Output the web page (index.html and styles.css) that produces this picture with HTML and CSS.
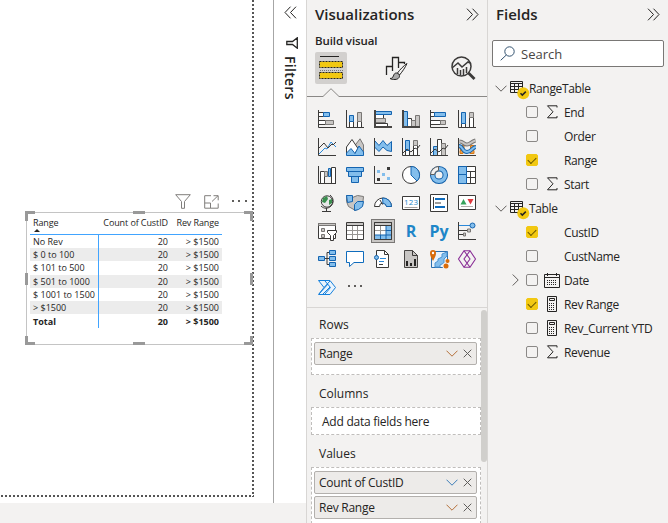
FILE: index.html
```html
<!DOCTYPE html>
<html lang="en">
<head>
	<meta charset="utf-8">
	<meta name="viewport" content="width=device-width, initial-scale=1">
	<title>Report</title>
	<link rel="stylesheet" href="styles.css">
</head>
<body>

<!-- shared icons -->
<svg class="defs" aria-hidden="true">
	<symbol id="sigma" viewBox="0 0 12 14"><path class="l" d="M11 2.500V.8H1.500L7 6.800l-5.500 6H11V11"/></symbol>
	<symbol id="down" viewBox="0 0 12 7"><path class="l" d="M.5.7 6 6.200 11.500.7"/></symbol>
	<symbol id="close" viewBox="0 0 9 9"><path class="l" d="M.7.7l7.600 7.600M8.300.7.7 8.300"/></symbol>
	<symbol id="chevrons" viewBox="0 0 13 13"><path class="l" d="M1 .7l5.500 5.800L1 12.300M6.500.7l5.500 5.800-5.500 5.800"/></symbol>
	<symbol id="calc" viewBox="0 0 12 16"><path class="l" d="M1.500.5h9v15h-9zM3.500 2.500h5v2h-5z"/><path class="l" stroke-dasharray="1 1" d="M3 7.500h6M3 9.500h6M3 11.500h6M3 13.500h6"/></symbol>
	<symbol id="grid" viewBox="0 0 20 20"><path class="l" d="M.5.5h12v11H.5zM.5 2.500h12M.5 5.500h12M.5 8.500h12M4.500 2.500v9M8.500 2.500v9"/><circle cx="13.300" cy="12.300" r="6" fill="#f2c811"/><path d="M10.500 12.300l1.800 1.800 3.500-3.500" fill="none" stroke="#252423" stroke-width="1.500"/></symbol>
</svg>

<div class="app">
	<div class="report">
		<div class="page">
			<div class="visual-header">
				<svg width="16" height="15"><path d="M.7.7h14.600L9.500 7.500v6.800h-3V7.500z"/></svg>
				<svg width="15" height="14"><path d="M7 .7H.7v12.500h13.500V8.500M.7 8h5.800v5M8 6.500l6-5.800M9.500.7h4.700v4.600"/></svg>
				<svg width="16" height="4"><path class="dots" d="M0 0h2v2H0zM6 0h2v2H6zM13 0h2v2h-2z"/></svg>
			</div>
			<div class="visual">
				<svg class="handles" width="230" height="135">
					<path d="M0 0h10v3H3v7H0zM108 0h12v3h-12zM219 0h9v10h-3V3h-6zM0 62h3v12H0zM225 62h3v12h-3zM0 125h3v6h7v3H0zM108 131h12v3h-12zM228 125h-3v6h-6v3h9z"/>
				</svg>
				<table class="matrix">
					<thead>
						<tr><th>Range<i class="sort"></i></th><th>Count of CustID</th><th>Rev Range</th></tr>
					</thead>
					<tbody>
						<tr><td>No Rev</td><td>20</td><td>&gt; $1500</td></tr>
						<tr><td>$ 0 to 100</td><td>20</td><td>&gt; $1500</td></tr>
						<tr><td>$ 101 to 500</td><td>20</td><td>&gt; $1500</td></tr>
						<tr><td>$ 501 to 1000</td><td>20</td><td>&gt; $1500</td></tr>
						<tr><td>$ 1001 to 1500</td><td>20</td><td>&gt; $1500</td></tr>
						<tr><td>&gt; $1500</td><td>20</td><td>&gt; $1500</td></tr>
						<tr class="total"><td>Total</td><td>20</td><td>&gt; $1500</td></tr>
					</tbody>
				</table>
			</div>
		</div>
	</div>

	<div class="filters">
		<svg class="flip" width="13" height="13"><use href="#chevrons"/></svg>
		<svg class="funnel" width="12" height="12"><path class="l" stroke-width="1.300" d="M11.300.8v10.400L6.500 7.500H.8v-3h5.700z"/></svg>
		<span>Filters</span>
	</div>

	<div class="viz">
		<div class="pane-title"><h2>Visualizations</h2><svg width="13" height="13"><use href="#chevrons"/></svg></div>
		<h3>Build visual</h3>
		<div class="tabs">
			<div class="tab active">
				<svg width="25" height="26"><path d="M1 1.500h19" stroke="#252423"/><path d="M.5 6.500h23v6H.5zM.5 17.500h23v6H.5z" fill="#f2c811" stroke="#252423" stroke-dasharray="2 1"/><path d="M1 15.500h23" stroke="#777" stroke-dasharray="1 1"/></svg>
			</div>
			<div class="tab">
				<svg width="24" height="25"><path class="l" stroke-width="1.300" d="M1.500 19V10.500H7M7.500 15V1.500h6V12M13.500 6.500h6V8"/><path class="l" d="M22 7.500c-3 2-7 6-9.500 9.500l2 2C17.500 15.500 20.500 11 22 7.500z"/><path d="M5 22.500c3 0 3-2 4-4s3.500-2 5 0-.5 5-4 5c-2 0-4-.3-5-1z" fill="#aaa" stroke="#252423"/></svg>
			</div>
			<div class="tab">
				<svg width="25" height="25"><g fill="none" stroke="#3b3a39" stroke-width="1.500"><circle cx="10.500" cy="10.500" r="9.500"/><path d="M1 12l6-5 4 4 6-5 2 1M6.500 12v6M9.500 14v5M12.500 13v6M15.500 11v6"/><path d="M17.500 17l6 6" stroke-width="2.800"/></g></svg>
			</div>
		</div>
		<svg class="notch" width="180" height="9"><path d="M0 8.500h16L24 .7l8 7.800h148"/></svg>

		<div class="gallery">
			<svg><path class="w" d="M.5 2.500h5v4h-5zM.5 10.500h7v4h-7z"/><path class="b" d="M5.500 2.500h6v4h-6z"/><path class="g" d="M7.500 10.500h8v4h-8z"/><path class="k" d="M.5 0v17.500H18"/></svg>
			<svg><path class="w" d="M3.500 11.500h4v6h-4zM11.500 11.500h4v6h-4z"/><path class="b" d="M3.500 5.500h4v6h-4z"/><path class="g" d="M11.500 2.500h4v9h-4z"/><path class="k" d="M.5 0v17.500H18"/></svg>
			<svg><path class="w" d="M.5 4.500h9v4h-9zM.5 13.500h13v3h-13z"/><path class="g" d="M.5 8.500h11v4h-11z"/><path class="b" d="M.5 1.500h17v3H.5z"/><path class="k2" d="M1 0v17h17"/></svg>
			<svg><path class="w" d="M5.500 8.500h4v9h-4z"/><path class="g" d="M9.500 10.500h4v7h-4zM13.500 5.500h4v12h-4z"/><path class="b" d="M1.500 1.500h4v16h-4z"/><path class="k2" d="M1 0v17h17"/></svg>
			<svg><path class="w" d="M.5 2.500h4v4h-4zM.5 10.500h10v4H.5z"/><path class="b" d="M4.500 2.500h11v4h-11z"/><path class="g" d="M10.500 10.500h5v4h-5z"/><path class="k" d="M.5 0v17.500H18"/></svg>
			<svg><path class="w" d="M3.500 13.500h4v4h-4zM11.500 7.500h4v10h-4z"/><path class="b" d="M3.500 2.500h4v11h-4z"/><path class="g" d="M11.500 2.500h4v5h-4z"/><path class="k" d="M.5 0v17.500H18"/></svg>

			<svg><path class="bl" d="M1 16l6-6 2 1 4-7 5 5"/><path class="k" d="M.5 0v17.500H18M1 10l5-5 4 5 4-4 1 1 3-3"/></svg>
			<svg><path class="g" d="M8.500 8L14 .8 17.500 7v10h-6z"/><path class="w" d="M.5 16V9L6 1.500l6 9-3 5z"/><path class="b" d="M.5 17.500V15L5 10.500l4 5 4-7.500 4.500 6v3.500z"/></svg>
			<svg><path class="b" d="M.5 2.500L5 7.500l4-5 4 5 4.500-4v10l-4.500-1-4-3.500-4 4.500-4.500-4.500z"/><path class="k" d="M.5 0v17.500H18"/></svg>
			<svg><path class="w" d="M3.500 10.500h4v7h-4zM11.500 7.500h4v10h-4z"/><path class="b" d="M3.500 2.500h4v10h-4z"/><path class="g" d="M11.500 2.500h4v5h-4z"/><path class="k" d="M.5 0v17.500H18M1 15l4-4 4 3 4-4 2 1 3-4"/></svg>
			<svg><path class="b" d="M3.500 8.500h4v9h-4z"/><path class="w" d="M7.500 1.500h4v16h-4z"/><path class="g" d="M11.500 5.500h4v12h-4z"/><path class="k" d="M.5 0v17.500H18M1 15l4-4 4 3 4-4 2 1 3-4"/></svg>
			<svg><path d="M2 7.500h4v4H2zM12.500 7.500h4v4h-4zM2 12.500h3v3H2zM12 12.500h4v3h-4z" fill="#f0a04b" stroke="#d87915"/><path d="M1.500 3.500c4 0 4 3 7.500 3s4-3 8.500-4" fill="none" stroke="#797775" stroke-width="4"/><path d="M1.500 3.500c4 0 4 3 7.500 3s4-3 8.500-4" fill="none" stroke="#c8c6c4" stroke-width="2"/><path d="M1 8c4 0 3 6 8 6s5-5 9-5" fill="none" stroke="#1464b0" stroke-width="4"/><path d="M1 8c4 0 3 6 8 6s5-5 9-5" fill="none" stroke="#83beec" stroke-width="2"/><path class="k" d="M.5 0v17.500H18"/></svg>

			<svg><path class="w" d="M2.500 5.500h4v12h-4zM13.500 1.500h4v16h-4z"/><path class="g" d="M6.500 5.500h3v5h-3z"/><path class="b" d="M10.500 2.500h2v8h-2z"/><path class="k" d="M.5 0v17.500H18"/></svg>
			<svg><path class="b" d="M.5 1.500h17v4H.5zM2.500 5.500h13v5h-13zM5.500 10.500h7v6h-7z"/></svg>
			<svg><path d="M13 1h3v3h-3zM3 12h3v3H3z" fill="#3b3a39"/><path d="M3 4h3v3H3zM8 7h3v3H8zM13 11h3v3h-3z" fill="#83beec"/><path class="k" d="M.5 0v17.500H18"/></svg>
			<svg><circle class="w" cx="9" cy="9" r="8.500"/><path class="b" d="M9 .5A8.500 8.500 0 0 1 15 15L9 9z"/></svg>
			<svg><circle cx="9" cy="9" r="6.300" fill="none" stroke="#0f5ea8" stroke-width="5.500"/><circle cx="9" cy="9" r="6.300" fill="none" stroke="#83beec" stroke-width="3.500"/><path d="M.5 8.500A8.500 8.500 0 0 1 8.500.5v4a4.500 4.500 0 0 0-4 4z" fill="#f3f2f1" stroke="#605e5c"/></svg>
			<svg><path class="w" d="M.5.5h17v17H.5zM8.500 5.500h9M12.500 5.500v12M8.500 11.500h9"/><path class="b" d="M.5.5h8v8h-8zM.5 8.500h8v9h-8z"/></svg>

			<svg><circle cx="9" cy="7.500" r="5.700" fill="#e8e8e8" stroke="#3b3a39"/><path d="M5 4l4-2 1 3-3 4-3-1zM11 6l3-1v4l-3 2z" fill="#3a8f4e"/><path class="k" d="M12 1c4 3 4 8 1 11s-7 3-10 0M8.500 14v3M4 17.500h9"/></svg>
			<svg><path class="g" d="M.5 1.500l6 2 5-2 6 1-1 9-7 5-7-4-2-5z"/><path class="b" d="M.5 1.500h6v6l-5 1zM8.500 10.500l3-3h6l-1 5-4 3-4 1z"/></svg>
			<svg><path class="w" d="M.5 12.500a8.500 8.500 0 0 1 17 0h-5a3.500 3.500 0 0 0-7 0z"/><path class="b" d="M8.500 4a8.500 8.500 0 0 1 9 8.500h-5A3.500 3.500 0 0 0 9 9.500z"/><path class="k" d="M8.500 10.500L6 6"/></svg>
			<svg><path class="w" d="M.5 2.500h17v13H.5z"/><text x="2" y="11" font-size="8" textLength="14">123</text><path d="M2.500 13.500h13" stroke="#a19f9d"/></svg>
			<svg><path class="w" d="M.5.5h17v17H.5z"/><path class="k" d="M3.500 3v12"/><path d="M5 5h10M5 13h10" stroke="#0f6cbd" stroke-width="2"/><path class="k" d="M5 9h6" stroke="#999"/></svg>
			<svg><path class="w" d="M.5 1.500h17v14H.5z"/><path d="M2.500 10.500L5.500 5l3 5.500z" fill="#36a35c"/><path d="M9.500 5h6l-3 5.500z" fill="#e0393e"/><path d="M3 12.500h12" stroke="#b3b0ad"/></svg>

			<svg><path class="w" d="M.5 1.500h17v15H.5z"/><path class="g" d="M.5 1.500h17v2H.5zM3.500 6.500h3v3h-3zM3.500 12.500h3v3h-3z"/><path class="w" d="M9.500 8.500h9v2l-3 3v5h-3v-5l-3-3z"/></svg>
			<svg><path class="w" d="M.5.5h17v17H.5z"/><path d="M1 8.500h16M1 12.500h16M6.500 4v13M11.500 4v13" stroke="#979593"/><path d="M1 1h16v2.500H1z" fill="#c8c6c4"/><path class="k" d="M0 3.500h18"/></svg>
			<div class="selected"><svg><path class="w" d="M.5.5h17v17H.5z"/><path d="M1 13h16v4H1zM12 4h5v13h-5z" fill="#83beec"/><path d="M1 8.500h11M6.500 4v9" stroke="#979593"/><path d="M1 13h16M6.500 13v4M12 4v13M12 8.500h5" stroke="#1464b0"/><path d="M1 1h16v2.500H1z" fill="#c8c6c4"/><path class="k" d="M0 3.500h18M.5.5h17v17H.5z"/></svg></div>
			<b>R</b>
			<b>Py</b>
			<svg><path class="k" d="M.5 0v17.500H18"/><path class="bl" d="M1 3.500h11"/><path class="k" stroke="#777" d="M1 8.500h8M1 12.500h4"/><path class="g" d="M9.500 7h3v3h-3zM5.500 11h2v3h-2z"/><circle class="b" cx="14.500" cy="3.500" r="2.500"/></svg>

			<svg><path class="k" d="M6 8.500h6M9 2.500h3M9 14.500h3M9 2.500v12"/><path class="b" d="M.5 6.500h6v4h-6zM11.500.5h6v4h-6zM11.500 6.500h6v4h-6zM11.500 12.500h6v4h-6z"/></svg>
			<svg><path d="M.5 1.500h17v11H8L3.500 16.500v-4h-3z" fill="#fff" stroke="#0f6cbd"/></svg>
			<svg><path class="w" d="M2.500.5h8l4 4v13h-12z"/><path class="k" d="M10.500.5v4h4"/><path class="bl" d="M6 8.500h6M5 11.500h5"/><path class="k" stroke="#999" d="M5 14.500h4"/><circle class="b" cx="2.500" cy="7.500" r="2"/></svg>
			<svg><path class="g dark" d="M2.500.5h8l5 5v12h-13z"/><path class="k" d="M10.500.5v5h5"/><path d="M4 11h2v5H4zM8 13h2v3H8zM12 9h2v7h-2z" fill="#252423"/></svg>
			<svg><path d="M1.500 1.500h16v16h-16z" fill="#e9f3fb" stroke="#2b6fae"/><path d="M5 17V13l3-2V9l4-2V4l5-2v4l-3 3v4l-4 2v2z" fill="#83beec" stroke="#4a94d4"/><path d="M3 11C1 7 0 6 0 3a3 3 0 0 1 6 0c0 3-1 4-3 8z" fill="#d86c0b"/><circle cx="3" cy="3" r="1.200" fill="#fff"/><circle cx="16" cy="16" r="3.500" fill="#f3f2f1"/><circle cx="16" cy="16" r="2.500" fill="#d86c0b"/><circle cx="17.500" cy="11" r="2" fill="#d86c0b"/></svg>
			<svg><g fill="none" stroke="#8a2f97" stroke-width="1.100"><path d="M6 .8h6l5.500 8.200-5.500 8.200H6L.5 9z"/><path d="M6 .8L12 9 6 17.200M12 .8L6 9l6 8.200"/></g></svg>

			<svg><path d="M.5 2.500H12L17.500 9.500 12 16.500H.5L6 9.500z" fill="#eaf4fd" stroke="#1480dc"/><path d="M7 3l5.500 6.500L7 16M6 9.500L12 3M1 16L10 6M5 16l7-7" fill="none" stroke="#1480dc"/></svg>
			<svg><path d="M2 7h2v2H2zM8 7h2v2H8zM14 7h2v2h-2z" fill="#605e5c"/></svg>
		</div>

		<div class="wells">
			<div class="well-list">
				<h4>Rows</h4>
				<div class="well">
					<div class="pill">Range<svg class="orange" width="12" height="7"><use href="#down"/></svg><svg width="9" height="9"><use href="#close"/></svg></div>
				</div>
				<h4>Columns</h4>
				<div class="well empty">Add data fields here</div>
				<h4>Values</h4>
				<div class="well open">
					<div class="pill">Count of CustID<svg class="blue" width="12" height="7"><use href="#down"/></svg><svg width="9" height="9"><use href="#close"/></svg></div>
					<div class="pill">Rev Range<svg class="orange" width="12" height="7"><use href="#down"/></svg><svg width="9" height="9"><use href="#close"/></svg></div>
				</div>
			</div>
			<div class="thumb"></div>
		</div>
	</div>

	<div class="fields">
		<div class="pane-title"><h2>Fields</h2><svg width="13" height="13"><use href="#chevrons"/></svg></div>
		<div class="search">
			<svg width="15" height="15"><circle cx="9.500" cy="5.500" r="4.700"/><path d="M6.300 9L.7 14.300"/></svg>
			<span>Search</span>
		</div>
		<ul>
			<li class="group"><svg class="arrow" width="12" height="7"><use href="#down"/></svg><svg class="grid" width="20" height="20"><use href="#grid"/></svg>RangeTable</li>
			<li><i class="box"></i><span class="kind"><svg width="12" height="14"><use href="#sigma"/></svg></span>End</li>
			<li><i class="box"></i><span class="kind"></span>Order</li>
			<li><i class="box on"></i><span class="kind"></span>Range</li>
			<li><i class="box"></i><span class="kind"><svg width="12" height="14"><use href="#sigma"/></svg></span>Start</li>
			<li class="group"><svg class="arrow" width="12" height="7"><use href="#down"/></svg><svg class="grid" width="20" height="20"><use href="#grid"/></svg>Table</li>
			<li><i class="box on"></i><span class="kind"></span>CustID</li>
			<li><i class="box"></i><span class="kind"></span>CustName</li>
			<li class="expand"><svg class="arrow" width="7" height="12"><path class="l" d="M.7.5l5.500 5.500L.7 11.500"/></svg><i class="box"></i><span class="kind"><svg width="16" height="15"><path class="l" d="M.5 1.500h15v13H.5zM.5 4.500h15M3.500 0v3M12.500 0v3"/><path class="l" stroke-dasharray="1 1" d="M3 7.500h10M3 9.500h10M3 11.500h10"/></svg></span>Date</li>
			<li><i class="box on"></i><span class="kind"><svg width="12" height="16"><use href="#calc"/></svg></span>Rev Range</li>
			<li><i class="box"></i><span class="kind"><svg width="12" height="16"><use href="#calc"/></svg></span>Rev_Current YTD</li>
			<li><i class="box"></i><span class="kind"><svg width="12" height="14"><use href="#sigma"/></svg></span>Revenue</li>
		</ul>
	</div>
</div>

</body>
</html>
```
FILE: styles.css
```css
*{
	box-sizing: border-box;
}
body{
	margin: 0;
	font-family: "Open Sans", "Noto Sans", sans-serif;
	font-size: 12px;
	color: #252423;
	background-color: #f3f2f1;
	overflow: hidden;
}
h2, h3, h4, ul{
	margin: 0;
	padding: 0;
	font-weight: 600;
}
svg{
	display: block;
	flex: none;
}
.defs{
	position: absolute;
	width: 0;
	height: 0;
}
.l{
	fill: none;
	stroke: currentColor;
}

.app{
	display: flex;
	height: 523px;
}

/* report canvas */
.report{
	width: 274px;
	height: 503px;
	background-color: white;
	border-right: 1px solid #a6a6a6;
}
.page{
	width: 254px;
	height: 497px;
	padding: 194px 0 0 25px;
	background-image: repeating-linear-gradient(to bottom, #555 0 2px, transparent 2px 4px), repeating-linear-gradient(to right, transparent 0 1px, #555 1px 3px, transparent 3px 4px);
	background-size: 2px 100%, 100% 2px;
	background-position: right top, left bottom;
	background-repeat: no-repeat;
}
.visual-header{
	display: flex;
	align-items: center;
	gap: 13px;
	height: 15px;
	margin-bottom: 3px;
	padding-left: 150px;
}
.visual-header path{
	fill: none;
	stroke: #807e7c;
}
.visual-header .dots{
	fill: #605e5c;
	stroke: none;
}
.visual{
	position: relative;
	width: 227px;
	height: 133px;
	margin-left: 1px;
	padding: 3px 0 0 3px;
	border: 1px solid #c4c4c4;
	border-right: 0;
}
.handles{
	position: absolute;
	left: -2px;
	top: -2px;
	fill: #999;
}
.matrix{
	width: 192px;
	table-layout: fixed;
	border-collapse: separate;
	border-spacing: 0;
	font-size: 9px;
	line-height: 13px;
}
.matrix th, .matrix td{
	padding: 0 3px;
	text-align: right;
	font-weight: 400;
	white-space: nowrap;
}
.matrix th{
	height: 19px;
	vertical-align: top;
	letter-spacing: -0.1px;
	border-bottom: 1px solid #41a4ff;
}
.matrix td{
	height: 13.2px;
}
.matrix th:first-child, .matrix td:first-child{
	width: 69px;
	text-align: left;
}
.matrix td:first-child{
	border-right: 1px solid #41a4ff;
}
.matrix th:last-child{
	width: 51px;
}
.matrix tbody tr:nth-child(even){
	background-color: #ececec;
}
.matrix .total td{
	font-weight: 700;
	height: 14px;
}
.sort{
	display: block;
	width: 0;
	margin-left: 1px;
	border: 3px solid transparent;
	border-top: 0;
	border-bottom: 3px solid #252423;
}

/* collapsed filters pane */
.filters{
	width: 32px;
	height: 503px;
	padding-top: 6px;
	display: flex;
	flex-direction: column;
	align-items: center;
	background-color: white;
}
.flip{
	transform: scaleX(-1);
}
.funnel{
	margin: 18px 0 7px 3px;
}
.filters span{
	writing-mode: vertical-rl;
	font-size: 14px;
	font-weight: 600;
	line-height: 16px;
	letter-spacing: 0.3px;
}

/* visualizations pane */
.pane-title{
	display: flex;
	justify-content: space-between;
	align-items: center;
	height: 28px;
	padding: 0 8px 0 8px;
}
.pane-title h2{
	font-size: 15px;
	line-height: 20px;
}
.viz{
	width: 181px;
	display: flex;
	flex-direction: column;
	border-left: 1px solid #d8d6d4;
}
.viz h3{
	padding-left: 8px;
	margin-top: 4px;
	font-size: 11.500px;
	line-height: 18px;
	letter-spacing: -0.1px;
}
.tabs{
	display: flex;
	gap: 34px;
	padding: 2px 8px 0;
}
.tab{
	display: flex;
	align-items: center;
	justify-content: center;
	width: 32px;
	height: 32px;
	border-radius: 2px;
}
.tab svg{
	fill: none;
}
.active{
	background-color: #d2d0ce;
}
.notch{
	margin-top: 4px;
	fill: none;
	stroke: #8a8886;
}
.gallery{
	display: grid;
	grid-template-columns: repeat(6, 28px);
	grid-auto-rows: 28px;
	place-items: center;
	padding: 8px 0 0 6px;
	height: 210px;
}
.gallery svg{
	width: 18px;
	height: 18px;
	overflow: visible;
}
.gallery b{
	color: #1e86c8;
	font-size: 16px;
	line-height: 20px;
}
.gallery text{
	fill: #1e86c8;
}
.selected{
	padding: 2px;
	border: 1px solid #797775;
	background-color: #c8c6c4;
}
.w{
	fill: #fff;
	stroke: #3b3a39;
}
.b{
	fill: #83beec;
	stroke: #1464b0;
}
.g{
	fill: #c8c6c4;
	stroke: #797775;
}
.dark{
	stroke: #484644;
}
.k{
	fill: none;
	stroke: #3b3a39;
}
.k2{
	fill: none;
	stroke: #484644;
	stroke-width: 2px;
}
.bl{
	fill: none;
	stroke: #2b88d8;
}

.wells{
	display: flex;
	flex: 1;
	border-top: 1px solid #d8d6d4;
	overflow: hidden;
}
.well-list{
	width: 174px;
	padding: 3px 0 0 4px;
}
.wells h4{
	height: 27px;
	padding-left: 8px;
	font-weight: 400;
	line-height: 28px;
}
.well{
	width: 170px;
	margin-bottom: 5px;
	padding: 3px 3px 7px 2px;
	border: 1px dashed #c0bebc;
	background-color: white;
}
.well.empty{
	height: 28px;
	padding: 0 10px;
	line-height: 27px;
	letter-spacing: -0.25px;
	white-space: nowrap;
}
.pill{
	display: flex;
	align-items: center;
	gap: 5px;
	height: 23px;
	padding: 0 4px;
	margin-bottom: 2px;
	border: 1px solid #b3b0ad;
	border-radius: 2px;
	background-color: #edebe9;
	letter-spacing: -0.25px;
}
.pill svg{
	color: #605e5c;
}
.pill svg:first-of-type{
	margin-left: auto;
}
.pill .orange{
	color: #b5703a;
}
.pill .blue{
	color: #3f7fb8;
}
.thumb{
	width: 6px;
	height: 152px;
	margin-top: 2px;
	border-radius: 3px;
	background-color: #d0cfcc;
}

/* fields pane */
.fields{
	width: 181px;
	border-left: 1px solid #d8d6d4;
}
.search{
	display: flex;
	align-items: center;
	gap: 6px;
	width: 172px;
	height: 27px;
	margin: 12px 0 9px 4px;
	padding-left: 7px;
	border: 1px solid #797775;
	border-radius: 2px;
	background-color: white;
	font-size: 13px;
	color: #484644;
}
.search svg{
	fill: none;
	stroke: #33526f;
}
.fields ul{
	list-style: none;
	font-weight: 400;
	letter-spacing: -0.35px;
}
.fields li{
	display: flex;
	align-items: center;
	height: 24px;
	padding-left: 38px;
}
.fields .group{
	padding-left: 7px;
}
.group .arrow{
	color: #605e5c;
	margin-right: 3px;
}
.group .grid{
	margin: 6px -1px 0 0;
}
.fields .expand{
	padding-left: 24px;
}
.expand .arrow{
	margin-right: 7px;
	color: #605e5c;
}
.box{
	width: 12px;
	height: 12px;
	border: 1px solid #8a8886;
	border-radius: 2px;
}
.on{
	border-color: #f2c811;
	background-color: #f2c811;
}
.on::after{
	content: "";
	display: block;
	width: 7px;
	height: 4px;
	margin: 2px 0 0 1px;
	border: solid #665400;
	border-width: 0 0 1px 1px;
	transform: rotate(-45deg);
}
.kind{
	display: flex;
	justify-content: center;
	width: 26px;
}
.kind svg{
	margin-left: 2px;
}
```
